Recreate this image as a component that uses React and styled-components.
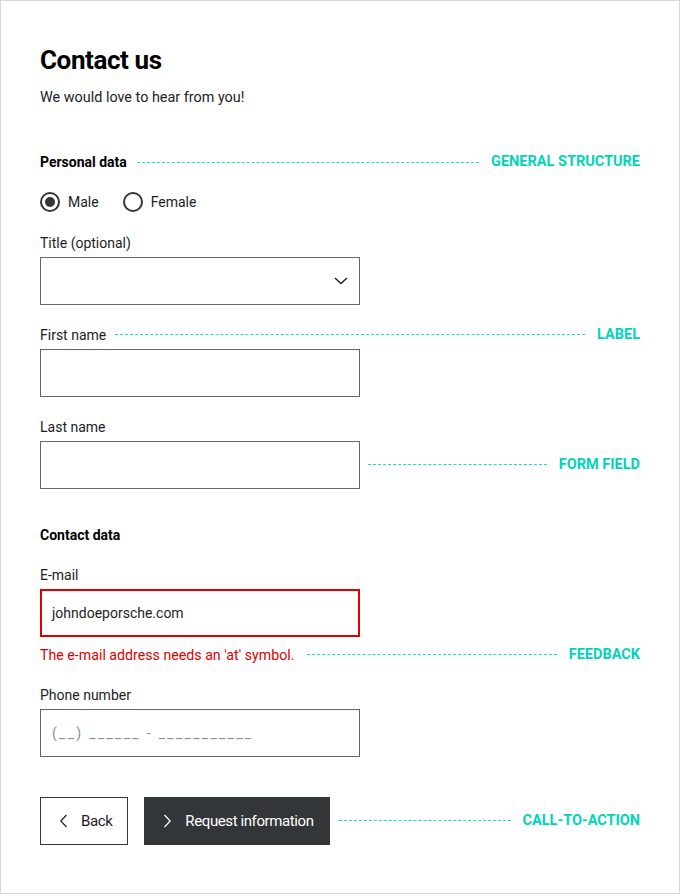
import React from 'react';
import styled, { createGlobalStyle } from 'styled-components';

const GlobalStyle = createGlobalStyle`
  html, body { margin: 0; padding: 0; background: #fff; }
  body { font-family: Roboto, "Liberation Sans", sans-serif; color: #1c1d1f; }
  * { box-sizing: border-box; }
`;

const Frame = styled.div`
  width: 680px;
  height: 894px;
  border: 1px solid #d8d8d8;
  padding: 43px 39px 0 39px;
  display: flex;
  flex-direction: column;
`;

const Heading = styled.h1`
  margin: 0;
  font-size: 26px;
  line-height: 32px;
  font-weight: 700;
  letter-spacing: -0.4px;
  color: #000;
`;

const Intro = styled.p`
  margin: 12px 0 0;
  font-size: 14.4px;
  line-height: 20px;
`;

const Row = styled.div`
  display: flex;
  align-items: center;
  margin-top: ${p => p.$top || 0}px;
`;

const SectionTitle = styled.h2`
  margin: 0;
  font-size: 14px;
  line-height: 20px;
  font-weight: 700;
  color: #000;
`;

const Dash = styled.span`
  flex: 1;
  height: ${p => p.$h || 2}px;
  border-top: 1px dashed #22dac2;
  margin-left: ${p => p.$gap || 10}px;
  margin-bottom: ${p => p.$lift || 0}px;
`;

const Note = styled.span`
  margin-left: 12px;
  margin-bottom: ${p => p.$lift || 0}px;
  font-size: 14.5px;
  line-height: 20px;
  font-weight: 700;
  color: #00d5b9;
  white-space: nowrap;
`;

const RadioGroup = styled.div`
  display: flex;
  gap: 24px;
  margin-top: 20px;
`;

const RadioLabel = styled.label`
  display: flex;
  align-items: center;
  gap: 8px;
  font-size: 14px;
  line-height: 20px;
`;

const RadioCircle = styled.span`
  width: 20px;
  height: 20px;
  border-radius: 50%;
  border: 2px solid #323639;
  display: flex;
  align-items: center;
  justify-content: center;
  &::after {
    content: '';
    width: 10px;
    height: 10px;
    border-radius: 50%;
    background: ${p => (p.$checked ? '#323639' : 'transparent')};
  }
`;

const Field = styled.div`
  margin-top: ${p => p.$top || 20}px;
  display: flex;
  flex-direction: column;
`;

const Label = styled.div`
  font-size: 14px;
  line-height: 20px;
  margin-bottom: 4px;
`;

const Box = styled.div`
  width: 320px;
  height: 48px;
  border: ${p => (p.$error ? '2px solid #e00000' : '1px solid #626669')};
  padding: 0 ${p => (p.$error ? 10 : 11)}px;
  display: flex;
  align-items: center;
  justify-content: space-between;
  font-size: 14px;
  color: #1c1d1f;
  background: #fff;
`;

const Placeholder = styled.span`
  color: #8e9092;
  letter-spacing: 2.3px;
`;

const ErrorText = styled.span`
  font-size: 14.2px;
  line-height: 20px;
  color: #e00000;
`;

const ButtonRow = styled.div`
  display: flex;
  align-items: center;
  margin-top: 40px;
`;

const Button = styled.button`
  height: 48px;
  display: flex;
  align-items: center;
  gap: 14px;
  padding: 0 15px 0 19px;
  font-family: inherit;
  font-size: 15px;
  letter-spacing: -0.4px;
  border: 1px solid #323639;
  background: ${p => (p.$primary ? '#323639' : '#fff')};
  color: ${p => (p.$primary ? '#fff' : '#1c1d1f')};
  margin-left: ${p => (p.$primary ? 16 : 0)}px;
  cursor: pointer;
`;

const Chevron = ({ dir }) => (
  <svg width="7" height="14" viewBox="0 0 7 14" fill="none" stroke="currentColor" strokeWidth="1.2">
    {dir === 'left' ? <polyline points="6.5,1 0.8,7 6.5,13" /> : <polyline points="0.5,1 6.2,7 0.5,13" />}
  </svg>
);

const Caret = () => (
  <svg width="14" height="8" viewBox="0 0 14 8" fill="none" stroke="#1c1d1f" strokeWidth="1.4">
    <polyline points="1,1 7,6.5 13,1" />
  </svg>
);

export default function App() {
  return (
    <>
      <GlobalStyle />
      <Frame>
        <Heading>Contact us</Heading>
        <Intro>We would love to hear from you!</Intro>

        <Row $top={44}>
          <SectionTitle>Personal data</SectionTitle>
          <Dash $h={1} />
          <Note>GENERAL STRUCTURE</Note>
        </Row>

        <RadioGroup>
          <RadioLabel><RadioCircle $checked />Male</RadioLabel>
          <RadioLabel><RadioCircle />Female</RadioLabel>
        </RadioGroup>

        <Field $top={21}>
          <Label>Title (optional)</Label>
          <Box><span /><Caret /></Box>
        </Field>

        <Field>
          <Row>
            <Label>First name</Label>
            <Dash $gap={9} $lift={4} />
            <Note $lift={4}>LABEL</Note>
          </Row>
          <Box />
        </Field>

        <Field>
          <Label>Last name</Label>
          <Row>
            <Box />
            <Dash $gap={8} />
            <Note>FORM FIELD</Note>
          </Row>
        </Field>

        <Row $top={36}>
          <SectionTitle>Contact data</SectionTitle>
        </Row>

        <Field>
          <Label>E-mail</Label>
          <Box $error>johndoeporsche.com</Box>
          <Row $top={8}>
            <ErrorText>The e-mail address needs an 'at' symbol.</ErrorText>
            <Dash $gap={13} />
            <Note>FEEDBACK</Note>
          </Row>
        </Field>

        <Field>
          <Label>Phone number</Label>
          <Box><Placeholder>(__) ______ - ___________</Placeholder></Box>
        </Field>

        <ButtonRow>
          <Button><Chevron dir="left" />Back</Button>
          <Button $primary><Chevron dir="right" />Request information</Button>
          <Dash $gap={9} />
          <Note>CALL-TO-ACTION</Note>
        </ButtonRow>
      </Frame>
    </>
  );
}
